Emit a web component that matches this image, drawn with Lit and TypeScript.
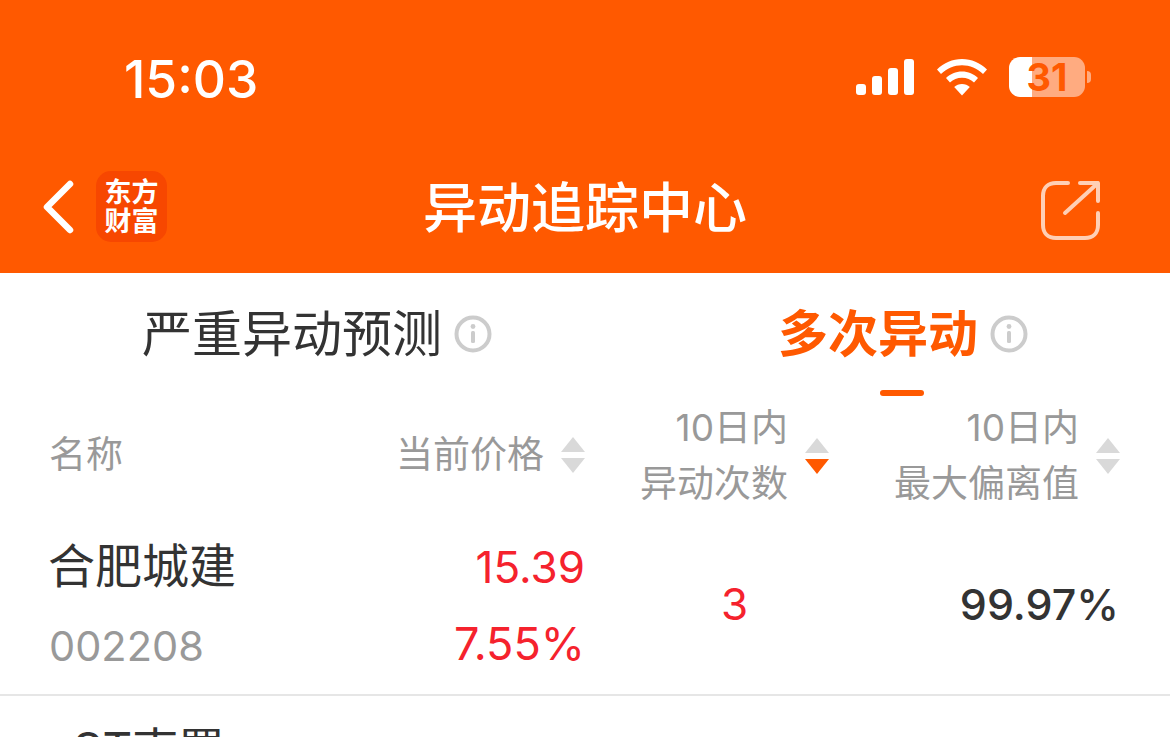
import { LitElement, html, css } from "lit";
import { customElement } from "lit/decorators.js";

@customElement("app-root")
export class AppRoot extends LitElement {
  static styles = css`
    :host { display: block; width: 1170px; height: 737px; overflow: hidden; background: #fff; font-family: Inter, "Noto Sans CJK SC", sans-serif; color: #333; }
    .top { background: #ff5900; height: 273px; color: #fff; display: flex; flex-direction: column; }
    .status { height: 157px; display: flex; align-items: flex-start; justify-content: space-between; padding: 50px 79px 0 124px; box-sizing: border-box; }
    .time { font-size: 51.5px; line-height: 58px; font-weight: 500; }
    .sys { display: flex; align-items: center; gap: 22.5px; padding-top: 7px; }
    .batt { position: relative; width: 76px; height: 40px; border-radius: 11px; background: linear-gradient(90deg, #fff 0 30%, #ffab80 30% 100%); color: #ff5900; font-size: 38px; font-weight: 700; line-height: 40px; text-align: center; margin-right: 6px; }
    .nip { position: absolute; left: 78px; top: 14px; width: 4px; height: 12px; border-radius: 0 6px 6px 0; background: #ffab80; }
    .nav { flex: 1; display: grid; grid-template-columns: 1fr auto 1fr; align-items: start; }
    .left { display: flex; align-items: flex-start; padding-left: 41px; }
    .right { display: flex; justify-content: flex-end; padding: 23px 69px 0 0; }
    .back { margin-top: 23px; }
    .logo { margin: 14px 0 0 19px; width: 71px; height: 71px; border-radius: 15px; background: #f74700; font-size: 27px; line-height: 29px; font-weight: 700; text-align: center; display: flex; align-items: center; justify-content: center; }
    .title { padding-top: 17px; text-align: center; font-size: 54px; line-height: 70px; font-weight: 500; }
    .tabs { display: flex; gap: 286px; height: 127px; padding-left: 142px; }
    .tab { position: relative; height: 100%; display: flex; align-items: flex-start; gap: 12px; padding-top: 25px; font-size: 50px; line-height: 72px; color: #333; box-sizing: border-box; }
    .tab.on { color: #ff5900; font-weight: 700; }
    .tab.on::after { content: ""; position: absolute; left: 102px; bottom: 4px; width: 44px; height: 6px; border-radius: 3px; background: #ff5900; }
    .info { margin-top: 17px; }
    .head { display: grid; grid-template-columns: 240px 295px 244px 291px; height: 109px; padding-left: 50px; color: #999; font-size: 37px; line-height: 56px; align-items: center; }
    .hc { display: flex; justify-content: flex-end; align-items: center; gap: 17px; text-align: right; }
    .hc.single { padding-bottom: 2px; }
    .hc.l { justify-content: flex-start; margin-left: -1px; }
    .arrows { display: flex; flex-direction: column; gap: 6px; }
    .up { width: 0; height: 0; border: 12px solid transparent; border-top: 0; border-bottom: 15px solid #d9d9d9; }
    .dn { width: 0; height: 0; border: 12px solid transparent; border-bottom: 0; border-top: 15px solid #d9d9d9; }
    .dn.on { border-top-color: #ff5900; }
    .row { display: grid; grid-template-columns: 240px 295px 299px 235px; height: 187px; padding: 4px 0 0 50px; border-bottom: 2px solid #e6e6e6; box-sizing: border-box; align-items: center; }
    .name { font-size: 47px; line-height: 58px; color: #333; margin-left: -2px; }
    .code { font-size: 41.5px; line-height: 50px; color: #999; margin: 26px 0 0 -1px; }
    .price { text-align: right; font-size: 45px; line-height: 56px; color: #f5222d; display: flex; flex-direction: column; gap: 21px; padding-top: 3px; }
    .p1 { font-size: 44px; }
    .cnt { text-align: center; font-size: 44px; color: #f5222d; }
    .pct { text-align: right; font-size: 43px; color: #333; font-weight: 500; }
    .next { padding: 22px 0 0 50px; font-size: 46px; line-height: 62px; }
    .star { position: relative; top: 7px; }
  `;

  private info() {
    return html`<svg class="info" width="38" height="38" viewBox="0 0 38 38" fill="none">
      <circle cx="19" cy="19" r="16.5" stroke="#ccc" stroke-width="4"/>
      <circle cx="19" cy="11.5" r="2.4" fill="#ccc"/><rect x="17" y="16" width="4" height="12" rx="1.5" fill="#ccc"/></svg>`;
  }
  private arrows(on = false) {
    return html`<div class="arrows"><div class="up"></div><div class="dn ${on ? "on" : ""}"></div></div>`;
  }

  render() {
    return html`
      <div class="top">
        <div class="status">
          <div class="time">15:03</div>
          <div class="sys">
            <svg width="58" height="36" viewBox="0 0 58 36" fill="#fff">
              <rect x="0" y="25" width="10" height="11" rx="3"/><rect x="16" y="17" width="10" height="19" rx="3"/>
              <rect x="32" y="9" width="10" height="27" rx="3"/><rect x="48" y="0" width="10" height="36" rx="3"/>
            </svg>
            <svg width="50" height="37" viewBox="0 0 50 37" fill="#fff">
              <path d="M25 0C15.500 0 7 3.700 0 10.500l4 4.500C10 9.200 17 6.200 25 6.200s15 3 21 8.800l4-4.500C43 3.700 34.500 0 25 0z"/>
              <path d="M25 12.500c-6.200 0-11.800 2.400-16 6.500l4 4.500c3.200-3 7.300-4.800 12-4.800s8.800 1.800 12 4.800l4-4.500c-4.200-4.100-9.800-6.500-16-6.500z"/>
              <path d="M25 25c-3 0-5.700 1.100-7.800 3L25 36.500 32.800 28c-2.100-1.900-4.800-3-7.800-3z"/>
            </svg>
            <div class="batt">31<span class="nip"></span></div>
          </div>
        </div>
        <div class="nav">
          <div class="left">
            <svg class="back" width="36" height="54" viewBox="0 0 36 54" fill="none">
              <path d="M29 4L6 27l23 23" stroke="#fff" stroke-width="6.500" stroke-linecap="round" stroke-linejoin="round"/>
            </svg>
            <div class="logo"><div>东方<br />财富</div></div>
          </div>
          <div class="title">异动追踪中心</div>
          <div class="right">
            <svg width="60" height="60" viewBox="0 0 60 60" fill="none" stroke="#ffcfb5" stroke-width="4" stroke-linecap="round" stroke-linejoin="round">
              <path d="M27 3H15C7 3 2 8 2 16v29c0 8 5 13 13 13h29c8 0 13-5 13-13V33"/>
              <path d="M24 33L57 3M39 3h18v18"/>
            </svg>
          </div>
        </div>
      </div>
      <div class="tabs">
        <div class="tab">严重异动预测${this.info()}</div>
        <div class="tab on">多次异动${this.info()}</div>
      </div>
      <div class="head">
        <div class="hc l single">名称</div>
        <div class="hc single">当前价格${this.arrows()}</div>
        <div class="hc"><div>10日内<br />异动次数</div>${this.arrows(true)}</div>
        <div class="hc"><div>10日内<br />最大偏离值</div>${this.arrows()}</div>
      </div>
      <div class="row">
        <div><div class="name">合肥城建</div><div class="code">002208</div></div>
        <div class="price"><div class="p1">15.39</div><div>7.55%</div></div>
        <div class="cnt">3</div>
        <div class="pct">99.97%</div>
      </div>
      <div class="next"><span class="star">*</span>ST南置</div>
    `;
  }
}
